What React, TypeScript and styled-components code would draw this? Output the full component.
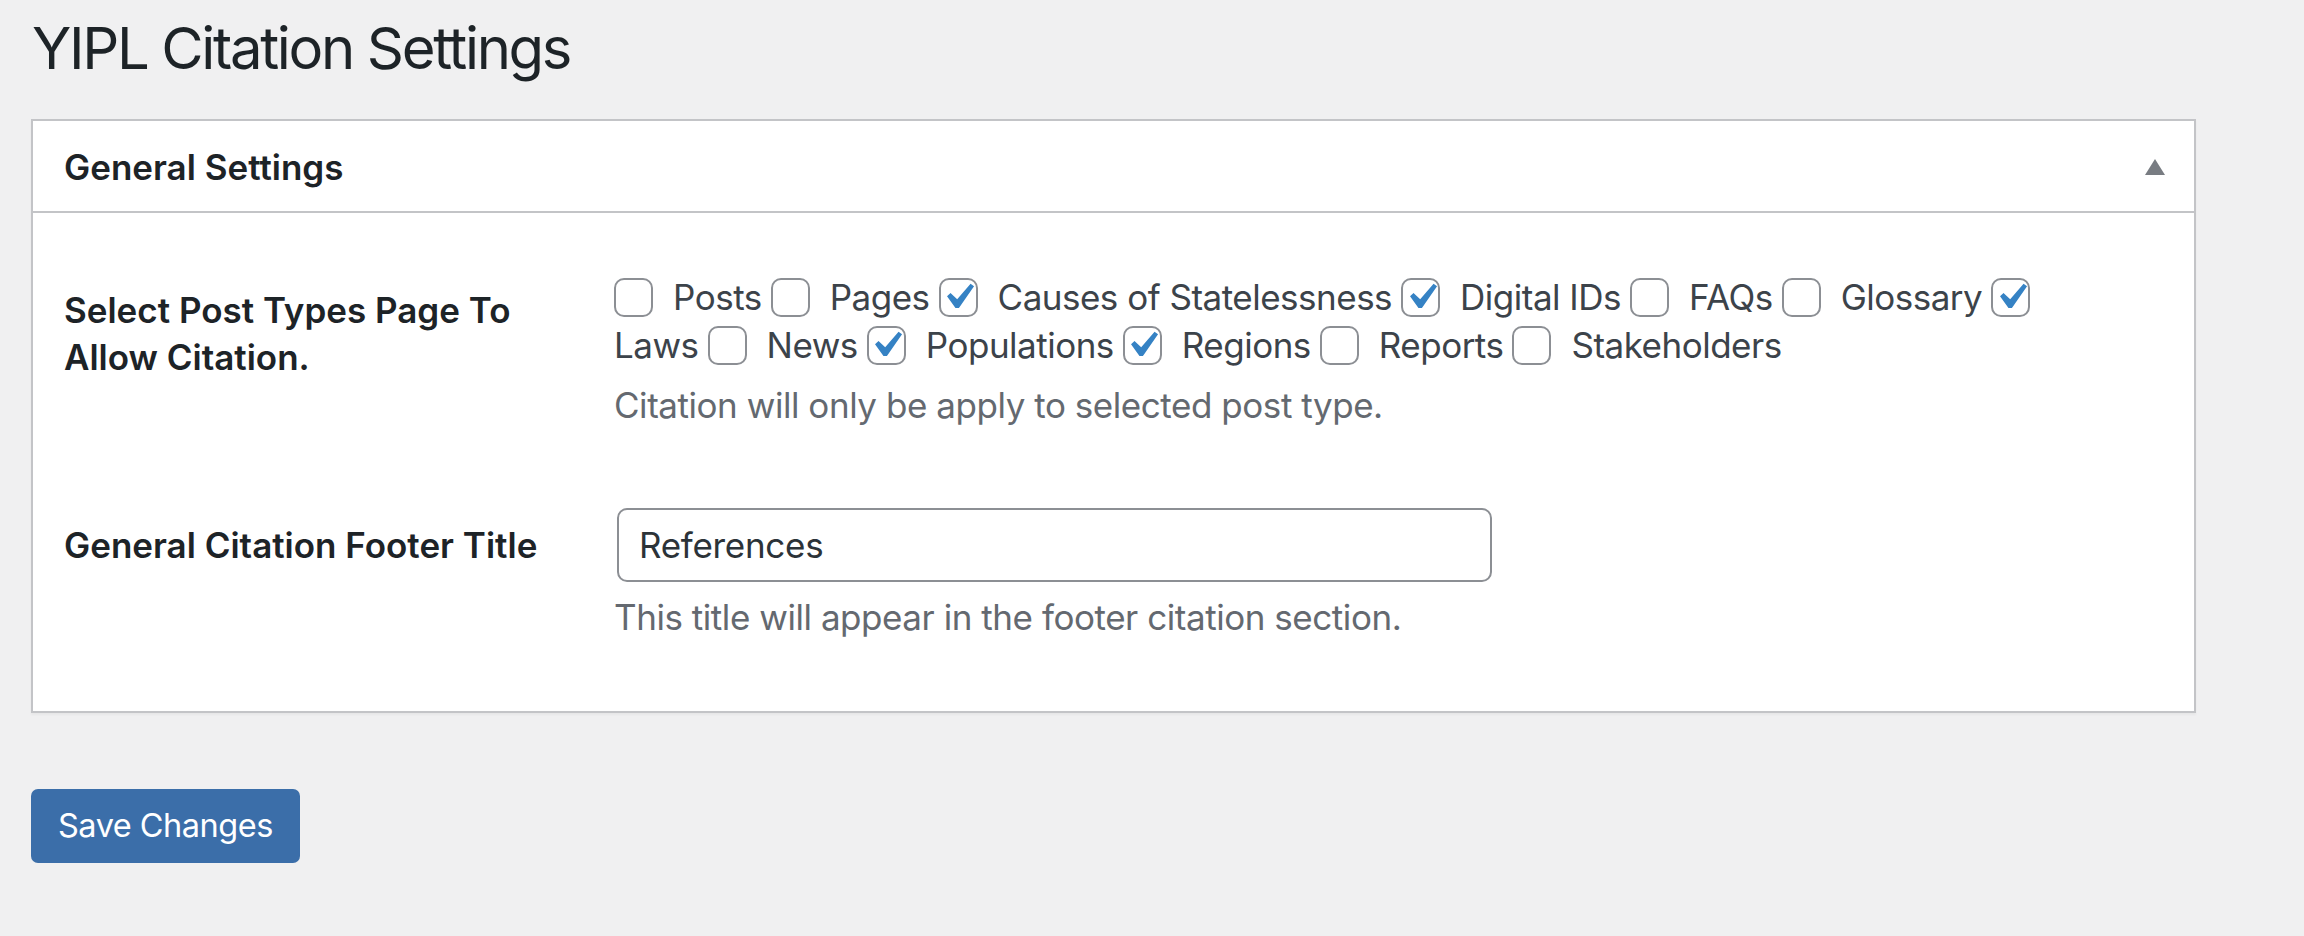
import React from "react";
import styled, { createGlobalStyle } from "styled-components";

const GlobalStyle = createGlobalStyle`
  html, body { margin: 0; padding: 0; background: #f0f0f1; }
  body {
    font-family: Inter, "Noto Sans", "Liberation Sans", sans-serif;
    color: #3c434a;
    -webkit-font-smoothing: antialiased;
  }
  * { box-sizing: border-box; }
`;

const Wrap = styled.div`
  padding: 11px 0 40px 31px;
  width: 2196px;
`;

const Title = styled.h1`
  margin: 0;
  padding-left: 1px;
  font-size: 58px;
  font-weight: 400;
  line-height: 75px;
  letter-spacing: -2.35px;
  color: #1d2327;
`;

const Postbox = styled.section`
  margin-top: 33px;
  background: #fff;
  border: 2px solid #c3c4c7;
  box-shadow: 0 2px 2px rgba(0, 0, 0, 0.04);
`;

const PostboxHeader = styled.div`
  display: flex;
  align-items: center;
  justify-content: space-between;
  height: 92px;
  padding: 2px 29px 0 31px;
  border-bottom: 2px solid #c3c4c7;
`;

const Handle = styled.h2`
  margin: 0;
  font-size: 35px;
  font-weight: 600;
  line-height: 49px;
  color: #1d2327;
`;

const ToggleArrow = styled.svg`
  display: block;
  width: 20px;
  height: 16px;
  fill: #787c82;
`;

const FormTable = styled.div`
  display: grid;
  grid-template-columns: 550px 1fr;
  padding: 0 31px 69px 31px;
`;

const Th = styled.div<{ $top: number }>`
  padding-top: ${(p) => p.$top}px;
  max-width: 475px;
  font-size: 35px;
  font-weight: 600;
  line-height: 47px;
  color: #1d2327;
`;

const Td = styled.div<{ $top: number; $bottom?: number }>`
  padding-top: ${(p) => p.$top}px;
  padding-bottom: ${(p) => p.$bottom ?? 0}px;
`;

const CheckList = styled.div`
  display: flex;
  flex-wrap: wrap;
  align-items: center;
  max-width: 1480px;
  padding-top: 1px;
`;

const Box = styled.span<{ $checked: boolean }>`
  display: inline-flex;
  align-items: center;
  justify-content: center;
  width: 39px;
  height: 39px;
  margin-right: 20px;
  border: 2px solid #8c8f94;
  border-radius: 10px;
  background: #fff;
  overflow: visible;
`;

const CheckMark = styled.svg`
  flex: none;
  width: 52px;
  height: 52px;
  fill: #3582c4;
`;

const OptionLabel = styled.span`
  margin-right: 9px;
  font-size: 35px;
  line-height: 48px;
  letter-spacing: -0.5px;
  color: #3c434a;
  white-space: nowrap;
`;

const Description = styled.p<{ $top: number }>`
  margin: ${(p) => p.$top}px 0 0;
  font-size: 35px;
  line-height: 48.75px;
  letter-spacing: -0.45px;
  color: #646970;
`;

const TextInput = styled.input`
  display: block;
  width: 875px;
  height: 74px;
  margin: 0 0 0 3px;
  padding: 0 20px;
  border: 2px solid #8c8f94;
  border-radius: 10px;
  background: #fff;
  font-family: inherit;
  font-size: 35px;
  letter-spacing: -0.3px;
  color: #2c3338;
  outline: none;
`;

const SaveButton = styled.button`
  display: block;
  margin-top: 76px;
  height: 74px;
  padding: 0 27px;
  border: none;
  border-radius: 7px;
  background: #3b6ea9;
  color: #fff;
  font-family: inherit;
  font-size: 32.5px;
  line-height: 74px;
  letter-spacing: -0.5px;
  cursor: pointer;
`;

type Opt = { name: string; checked: boolean };

const options: Opt[] = [
  { name: "Posts", checked: false },
  { name: "Pages", checked: false },
  { name: "Causes of Statelessness", checked: true },
  { name: "Digital IDs", checked: true },
  { name: "FAQs", checked: false },
  { name: "Glossary", checked: false },
  { name: "Laws", checked: true },
  { name: "News", checked: false },
  { name: "Populations", checked: true },
  { name: "Regions", checked: true },
  { name: "Reports", checked: false },
  { name: "Stakeholders", checked: false },
];

const Check = ({ checked }: { checked: boolean }) => (
  <Box $checked={checked} role="checkbox" aria-checked={checked}>
    {checked && (
      <CheckMark viewBox="0 0 20 20">
        <path d="M14.83 4.89l1.34.94-5.81 8.38H9.02L5.78 9.67l1.34-1.25 2.57 2.4z" />
      </CheckMark>
    )}
  </Box>
);

export default function App() {
  return (
    <>
      <GlobalStyle />
      <Wrap>
        <Title>YIPL Citation Settings</Title>
        <Postbox>
          <PostboxHeader>
            <Handle>General Settings</Handle>
            <ToggleArrow viewBox="0 0 20 16">
              <polygon points="10,0 20,16 0,16" />
            </ToggleArrow>
          </PostboxHeader>
          <FormTable>
            <Th $top={74}>Select Post Types Page To Allow Citation.</Th>
            <Td $top={59} $bottom={37}>
              <CheckList>
                {options.map((o) => (
                  <React.Fragment key={o.name}>
                    <Check checked={o.checked} />
                    <OptionLabel>{o.name}</OptionLabel>
                  </React.Fragment>
                ))}
              </CheckList>
              <Description $top={12}>
                Citation will only be apply to selected post type.
              </Description>
            </Td>
            <Th $top={55}>General Citation Footer Title</Th>
            <Td $top={41}>
              <TextInput defaultValue="References" />
              <Description $top={11}>
                This title will appear in the footer citation section.
              </Description>
            </Td>
          </FormTable>
        </Postbox>
        <SaveButton>Save Changes</SaveButton>
      </Wrap>
    </>
  );
}
